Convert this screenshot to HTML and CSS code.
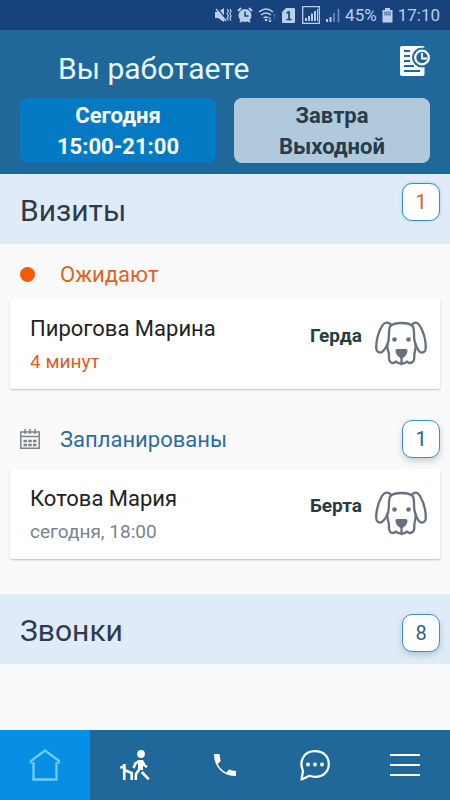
FILE: index.html
```html
<!DOCTYPE html>
<html lang="ru">
<head>
<meta charset="utf-8">
<meta name="viewport" content="width=device-width, initial-scale=1">
<title>Вы работаете</title>
<link rel="stylesheet" href="styles.css">
</head>
<body>
<svg width="0" height="0" class="defs" aria-hidden="true">
  <symbol id="dog" viewBox="0 0 52 46">
    <g fill="none" stroke="#68707c" stroke-width="2.300" stroke-linejoin="round" stroke-linecap="round">
      <path d="M15 5.500C17 3 21 2 26.500 2S36 3 38 5.500C40 10 38 18 40.500 23C41.500 27 39.500 30 39.300 34C39.500 37 39.500 40 37.500 41C35.500 42.500 33.500 42 32 40.500C30 43 28 42 26.500 43C25 42 23 43 21 40.500C19.500 42 18 42.500 16 41.500C13.500 40 13.800 37 14 34C13.800 30 11.500 27 12.500 23C15 18 13 10 15 5.500z"/>
      <path d="M16 3.500C13 .6 9.500 1 7 5C3.500 11 1.200 19 1.200 27C1.300 31 4.500 32.500 7 31C9.500 29 11.500 26 12.500 23"/>
      <path d="M37 3.500C40 .6 42.500 1 45 5C48.500 11 50.800 19 50.800 27C50.700 31 47.500 32.500 45 31C42.500 29 41.500 26 40.500 23"/>
      <path d="M26.500 36v6"/>
    </g>
    <path d="M20.500 30c0-1.300.6-2 1.500-2h9c.9 0 1.500.7 1.500 2 0 3-3 6.500-6 7.500-3-1-6-4.500-6-7.500z" fill="#68707c"/>
    <circle cx="19.500" cy="18.500" r="2.300" fill="#68707c"/><circle cx="33.500" cy="18.500" r="2.300" fill="#68707c"/>
  </symbol>
</svg>
<div class="app">
  <div class="status">
    <svg width="17" height="16" viewBox="0 0 17 16"><path d="M0 5h3l6-4v14l-6-4H0z" fill="currentColor"/><path d="M1 0l11 13" stroke="#18427c" stroke-width="1.500"/><path d="M1 2l10 12" stroke="currentColor" stroke-width="1.500"/><path d="M12 2l1.500 2-1.500 2.500 1.500 2.500-1.500 2.500 1.500 2M15 2l1 2-1 2.500 1 2.500-1 2.500 1 2" fill="none" stroke="currentColor" stroke-width="1.200"/></svg>
    <svg width="16" height="16" viewBox="0 0 16 16"><circle cx="8" cy="8.500" r="6.500" fill="currentColor"/><path d="M1 4l3-3M15 4l-3-3M3 15l2-2M13 15l-2-2" stroke="currentColor" stroke-width="2"/><path d="M8 4.500V9h3.500" fill="none" stroke="#18427c" stroke-width="1.500"/></svg>
    <svg width="19" height="16" viewBox="0 0 19 16"><path d="M1 5Q8-1 15 5M3 8q5-4 10 0M5.500 11Q8 9 10.500 11" fill="none" stroke="currentColor" stroke-width="1.500"/><circle cx="8" cy="13" r="1.300" fill="currentColor"/><path d="M12 10v5M10.500 13.500l1.500 1.500 1.500-1.500" fill="none" stroke="currentColor"/><path d="M16.500 12V7M15 8.500L16.500 7 18 8.500" fill="none" stroke="#4a6fa3"/></svg>
    <svg class="sim" width="13" height="15" viewBox="0 0 13 15"><path d="M4 0h8q1 0 1 1v13q0 1-1 1H1q-1 0-1-1V4z" fill="currentColor"/><path d="M4.500 5L7 4v7.500M4.500 11.500h5" fill="none" stroke="#18427c" stroke-width="1.700"/></svg>
    <svg width="18" height="18" viewBox="0 0 18 18"><path d="M.7.7h16.600v16.600H.7z" fill="none" stroke="currentColor" stroke-width="1.300"/><path d="M4 12v3M7 10v5M10 7.500V15M13 5v10" stroke="currentColor" stroke-width="2"/><path d="M15.500 3v12" stroke="currentColor"/></svg>
    <svg width="15" height="15" viewBox="0 0 15 15"><path d="M2 11v3M5.500 9v5" stroke="currentColor" stroke-width="2"/><path d="M9 5v9M13.500 1v13" stroke="#6f91bd" stroke-width="1.600"/></svg>
    <span>45%</span>
    <svg width="11" height="15" viewBox="0 0 11 15"><path d="M3 0h5v2h2.500v12.500H.5V2H3z" fill="currentColor"/><path d="M2 3.500h7v4H2z" fill="#6f91bd"/></svg>
    <span>17:10</span>
  </div>
  <header class="header">
    <div class="header-top">
      <h1>Вы работаете</h1>
      <button class="schedule" aria-label="Расписание">
        <svg width="30" height="31" viewBox="0 0 30 31"><path d="M2 0h20.500q2 0 2 2v26q0 2-2 2H2q-2 0-2-2V2q0-2 2-2z" fill="#fff"/><g stroke="#21689a" stroke-width="2.200"><path d="M4 5h6M4 10h6M4 15h6M4 20h10M4 25h16"/></g><circle cx="22" cy="11.500" r="10" fill="#21689a"/><circle cx="22" cy="11.500" r="6.800" fill="none" stroke="#fff" stroke-width="2.200"/><path d="M22 7v5.500h5" fill="none" stroke="#fff" stroke-width="1.900"/></svg>
      </button>
    </div>
    <div class="days">
      <button class="day day-active">Сегодня<br>15:00-21:00</button>
      <button class="day">Завтра<br>Выходной</button>
    </div>
  </header>
  <main>
    <section>
      <div class="section-head"><h2>Визиты</h2><span class="badge badge-wait">1</span></div>
      <div class="group-head group-wait"><span class="mark"><i class="dot"></i></span><h3>Ожидают</h3></div>
      <article class="card">
        <div class="person"><p class="name">Пирогова Марина</p><p class="time time-wait">4 минут</p></div>
        <strong>Герда</strong>
        <svg class="dog" width="52" height="46"><use href="#dog"/></svg>
      </article>
      <div class="group-head group-plan"><span class="mark"><svg width="20" height="20" viewBox="0 0 20 20"><g fill="none" stroke="#7b838b" stroke-width="1.500"><path d="M.8 3h18.400v16.200H.8zM.8 7.500h18.400M5 0v5M10 0v5M15 0v5"/></g><path d="M3.500 12h13M3.500 16h13" stroke="#7b838b" stroke-width="2.400" stroke-dasharray="3.500 1.250"/></svg></span><h3>Запланированы</h3><span class="badge badge-raised">1</span></div>
      <article class="card">
        <div class="person"><p class="name">Котова Мария</p><p class="time">сегодня, 18:00</p></div>
        <strong>Берта</strong>
        <svg class="dog" width="52" height="46"><use href="#dog"/></svg>
      </article>
    </section>
    <section class="calls">
      <div class="section-head"><h2>Звонки</h2><span class="badge badge-raised">8</span></div>
    </section>
  </main>
  <nav class="nav">
    <a href="#home" class="current" aria-label="Главная"><svg width="30" height="32" viewBox="0 0 30 32"><path d="M3.500 13v17.500h23V13M.8 14.500V12L15 1.500 29.200 12v2.500" fill="none" stroke="#73cbff" stroke-width="2.300"/></svg></a>
    <a href="#visits" aria-label="Визиты"><svg width="30" height="31" viewBox="0 0 30 31"><circle cx="21" cy="4" r="3.900" fill="#fff"/><path d="M18 10h5v10h-5z" fill="#fff"/><g fill="none" stroke="#fff" stroke-width="2.600"><path d="M19 11.200l-3.500 2.300-2 4.500M22.500 11l1.500 4 3 2M19.300 19.500l-3.300 4.500-.3 6M21 19v-3"/><path d="M21.800 22l7 7.300M4.200 14v16M5 20.300l6.700 2.800V30" /></g><path d="M0 16.500l3-1V14h2.500v6H3v-1.500H0z" fill="#fff"/></svg></a>
    <a href="#calls" aria-label="Звонки"><svg width="22" height="22" viewBox="0 0 22 22"><path d="M0 0h5.500q.5 4 1.200 7l-3 3q3 6 8.500 8.500l3-3q3 1 6.800 1.500v5Q12 22 6 16T0 0z" fill="#fff"/></svg></a>
    <a href="#chat" aria-label="Сообщения"><svg width="30" height="31" viewBox="0 0 30 31"><path d="M1.500 29.500L3 21C-1 12 3 1.200 15 1.200c8 0 13.800 5 13.800 12.800S23 26.800 15 26.800q-3 0-5.500-1z" fill="none" stroke="#fff" stroke-width="2.200" stroke-linejoin="round"/><g fill="#fff"><circle cx="8" cy="14.500" r="1.900"/><circle cx="15" cy="14.500" r="1.900"/><circle cx="22" cy="14.500" r="1.900"/></g></svg></a>
    <a href="#menu" aria-label="Меню"><svg width="30" height="24" viewBox="0 0 30 24"><path d="M0 2h30M0 12h30M0 22h30" stroke="#fff" stroke-width="2.200"/></svg></a>
  </nav>
</div>
</body>
</html>
```
FILE: styles.css
```css
* { box-sizing: border-box; }
body, h1, h2, h3, p { margin: 0; }
body { font-family: Roboto, "Noto Sans", sans-serif; background: #fafafa; color: #2f3b4b; }
h1, h2, h3 { font-weight: 400; }
button { border: 0; padding: 0; font: inherit; cursor: pointer; }
svg { flex: none; }
.defs { position: absolute; }
.app { min-height: 100vh; display: flex; flex-direction: column; }
.status { height: 30px; padding: 0 10px; display: flex; align-items: center; justify-content: flex-end; gap: 5px; background: #18427c; color: #b9ceeb; font-size: 17px; }
.sim { margin-right: 2px; }
.header { background: #21689a; padding: 10px 20px 11px; }
.header-top { height: 58px; display: flex; align-items: center; justify-content: space-between; padding: 0 0 2px 38px; }
h1 { font-size: 30px; color: #e6f7ff; }
.schedule { background: none; height: 44px; display: flex; }
.days { display: grid; grid-template-columns: 1fr 1fr; gap: 18px; }
.day { border-radius: 8px; padding: 2px 0 1px; font-size: 22px; line-height: 31px; font-weight: 700; background: #b0c9db; color: #263c4b; }
.day-active { background: #037ac3; color: #fff; }
main { flex: 1; }
.section-head { display: flex; align-items: flex-start; justify-content: space-between; height: 70px; padding: 9px 10px 0 20px; background: #dfecf8; }
h2 { font-size: 30px; line-height: 56px; }
.badge { width: 38px; height: 38px; margin-left: auto; display: flex; align-items: center; justify-content: center; border: 1px solid #3b8fc2; border-radius: 10px; background: #fff; font-size: 20px; color: #2b6489; }
.badge-wait { color: #d9611c; box-shadow: 0 0 3px #8dcbed; }
.badge-raised { box-shadow: 0 3px 6px #8ba1b080; }
.group-head { display: flex; align-items: center; padding: 0 10px 0 20px; }
.group-wait { padding-top: 6px; height: 55px; color: #df631f; }
.group-plan { margin-top: 20px; height: 60px; color: #2b6d9d; }
.mark { width: 40px; display: flex; }
.dot { width: 15px; height: 15px; border-radius: 50%; background: #f25c05; }
h3 { font-size: 22px; }
.card { display: flex; align-items: center; height: 90px; margin: 0 10px; padding: 0 13px 0 20px; background: #fff; border-radius: 2px; box-shadow: 0 1px 2px #0000003d; }
.person { flex: 1; padding-top: 2px; }
.name { font-size: 22px; line-height: 34px; color: #222; }
.time { font-size: 19px; line-height: 32px; color: #7b838b; }
.time-wait { color: #d9611c; }
strong { font-size: 19px; line-height: 30px; padding-bottom: 16px; color: #263c3e; }
.dog { margin-left: 13px; }
.calls { margin-top: 35px; }
.calls .section-head { padding-top: 20px; }
.calls h2 { line-height: 34px; }
.nav { display: grid; grid-template-columns: repeat(5, 1fr); height: 70px; background: #21689a; }
.nav a { display: flex; align-items: center; justify-content: center; }
.nav .current { background: #068fe4; }
```
